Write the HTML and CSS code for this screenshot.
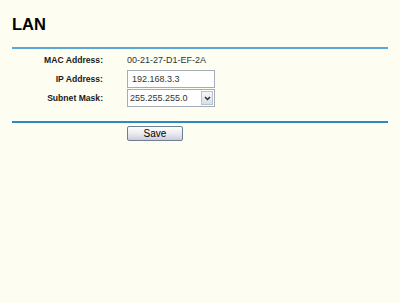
FILE: index.html
```html
<!DOCTYPE html>
<html>
<head>
    <title>LAN</title>
    <link rel="stylesheet" href="styles.css">
</head>
<body>
    <h1 class="title">LAN</h1>
    <div class="panel">
        <div class="row">
            <span class="label">MAC Address:</span>
            <span class="value">00-21-27-D1-EF-2A</span>
        </div>
        <div class="row">
            <label class="label" for="ip">IP Address:</label>
            <input class="text" type="text" id="ip" value="192.168.3.3">
        </div>
        <div class="row">
            <label class="label" for="mask">Subnet Mask:</label>
            <div class="select">
                <span class="select-text">255.255.255.0</span>
                <span class="select-btn">
                    <svg width="7" height="5" viewBox="0 0 7 5"><path d="M1 1 L3.5 3.5 L6 1" fill="none" stroke="#2b2b2b" stroke-width="1.5"/></svg>
                </span>
            </div>
        </div>
    </div>
    <div class="actions">
        <button class="btn">Save</button>
    </div>
</body>
</html>
```

FILE: styles.css
```css
body {
    margin: 0;
    padding: 0 12px;
    background-color: #fdfdf2;
    font-family: 'Liberation Sans', Arial, sans-serif;
    font-size: 9px;
    color: #000;
}

.title {
    box-sizing: border-box;
    margin: 0;
    padding-top: 15px;
    height: 47px;
    font-size: 16.5px;
    font-weight: bold;
}

.panel {
    display: flex;
    flex-direction: column;
    gap: 1px;
    border-top: 2px solid #5aa6d6;
    border-bottom: 2px solid #2b89c3;
    padding: 2px 0 14px;
}

.row {
    display: flex;
    align-items: center;
    height: 18px;
}

.label {
    width: 91px;
    margin-right: 24px;
    text-align: right;
    font-size: 8.6px;
    font-weight: bold;
    color: #1a1a1a;
}

.value {
    color: #333;
}

.text {
    box-sizing: border-box;
    width: 88px;
    height: 18px;
    margin: 0;
    padding: 0 4px;
    border: 1px solid #a5acb5;
    background: #fff;
    font-family: 'Liberation Sans', Arial, sans-serif;
    font-size: 9px;
    color: #333;
}

.select {
    box-sizing: border-box;
    display: flex;
    align-items: center;
    width: 88px;
    height: 18px;
    border: 1px solid #a5acb5;
    background: #fff;
    color: #333;
}

.select-text {
    flex: 1;
    padding-left: 2px;
}

.select-btn {
    display: flex;
    align-items: center;
    justify-content: center;
    width: 12px;
    height: 14px;
    margin-right: 1px;
    border: 1px solid #b9c3cf;
    box-sizing: border-box;
    background: linear-gradient(#f4f6f9, #d9dfe7);
}

.actions {
    padding: 3px 0 0 115px;
}

.btn {
    width: 56px;
    height: 15px;
    padding: 0;
    border: 1px solid #6e7f94;
    border-radius: 2px;
    background: linear-gradient(#ffffff, #e8e8ef 55%, #cccdda);
    font-family: 'Liberation Sans', Arial, sans-serif;
    font-size: 10px;
    color: #000;
}
```
